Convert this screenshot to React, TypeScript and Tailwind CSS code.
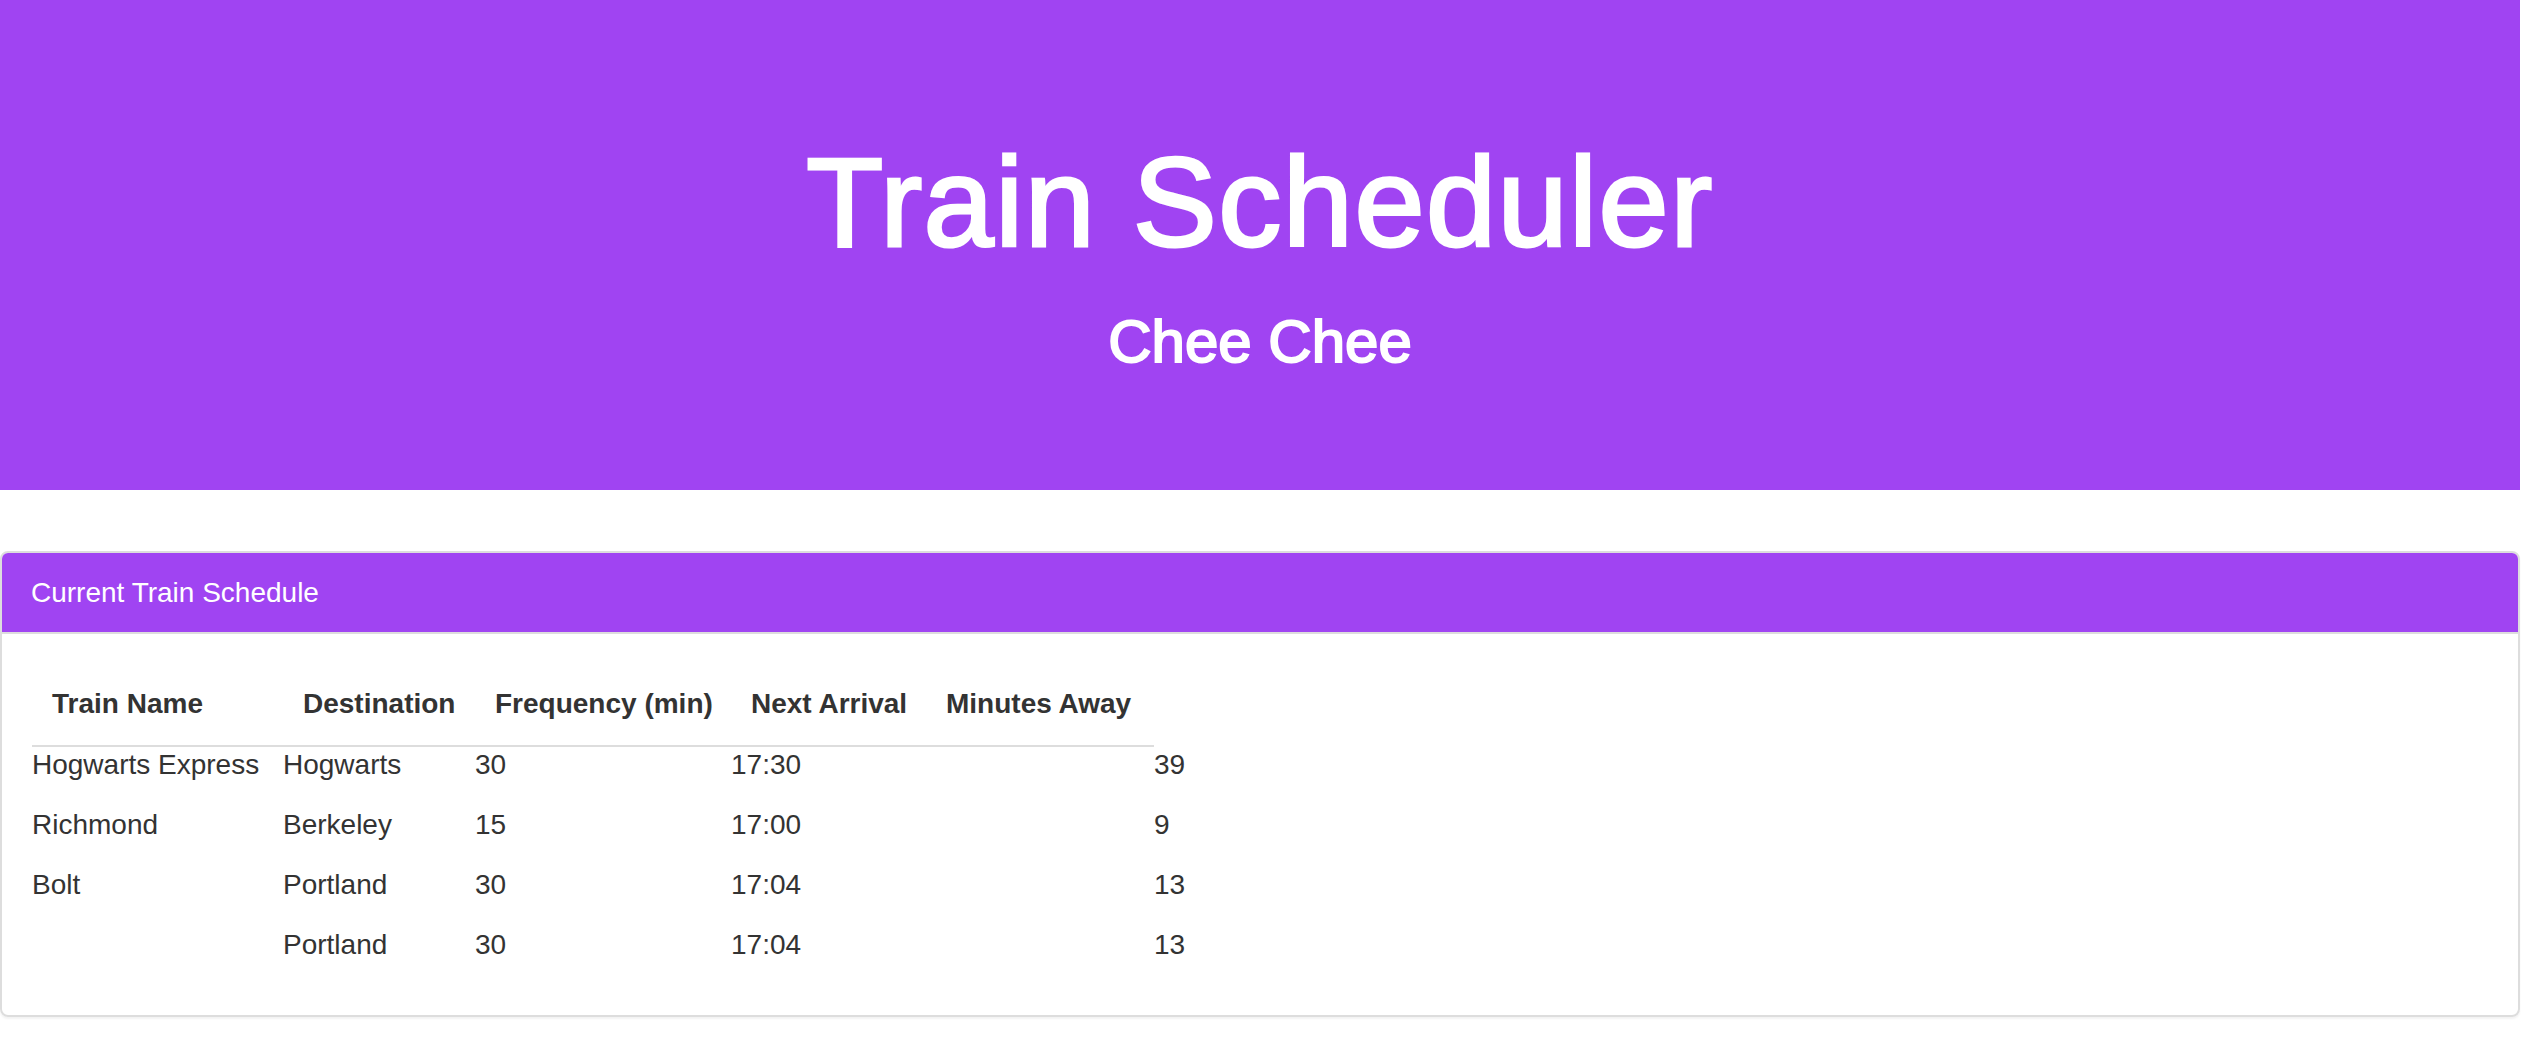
const trains = [
  { name: "Hogwarts Express", dest: "Hogwarts", freq: "30", next: "17:30", away: "39" },
  { name: "Richmond", dest: "Berkeley", freq: "15", next: "17:00", away: "9" },
  { name: "Bolt", dest: "Portland", freq: "30", next: "17:04", away: "13" },
  { name: "", dest: "Portland", freq: "30", next: "17:04", away: "13" },
];

export default function App() {
  return (
    <div className="w-[2520px] min-h-[1052px] bg-white text-[#333] font-['Liberation_Sans',Arial,sans-serif]">
      <header className="bg-[#a044f2] text-white text-center pt-[134px] pb-[115px]">
        <h1 className="text-[126px] leading-[1.1] tracking-[1.5px] [-webkit-text-stroke:3px_white]">
          Train Scheduler
        </h1>
        <h2 className="mt-[36px] text-[60px] leading-[1.1] [-webkit-text-stroke:2px_white]">Chee Chee</h2>
      </header>

      <section className="mt-[61px] border-2 border-[#dddddd] rounded-[8px] overflow-hidden shadow-[0_2px_2px_rgba(0,0,0,0.05)]">
        <div className="bg-[#a044f2] text-white text-[28px] leading-[39px] px-[29px] py-[20px] border-b-2 border-[#dddddd]">
          Current Train Schedule
        </div>

        <div className="px-[30px] pt-[30px] pb-[28px] text-[28px]">
          <div className="flex w-[1122px] border-b-2 border-[#dddddd] font-bold leading-[40px] pt-[20px] pb-[21px]">
            <div className="w-[251px] pl-[20px]">Train Name</div>
            <div className="w-[192px] pl-[20px]">Destination</div>
            <div className="w-[256px] pl-[20px]">Frequency (min)</div>
            <div className="w-[195px] pl-[20px]">Next Arrival</div>
            <div className="w-[228px] pl-[20px]">Minutes Away</div>
          </div>

          {trains.map((t, i) => (
            <div key={i} className="flex h-[60px] leading-[36px]">
              <div className="w-[251px]">{t.name}</div>
              <div className="w-[192px]">{t.dest}</div>
              <div className="w-[256px]">{t.freq}</div>
              <div className="w-[423px]">{t.next}</div>
              <div>{t.away}</div>
            </div>
          ))}
        </div>
      </section>
    </div>
  );
}
